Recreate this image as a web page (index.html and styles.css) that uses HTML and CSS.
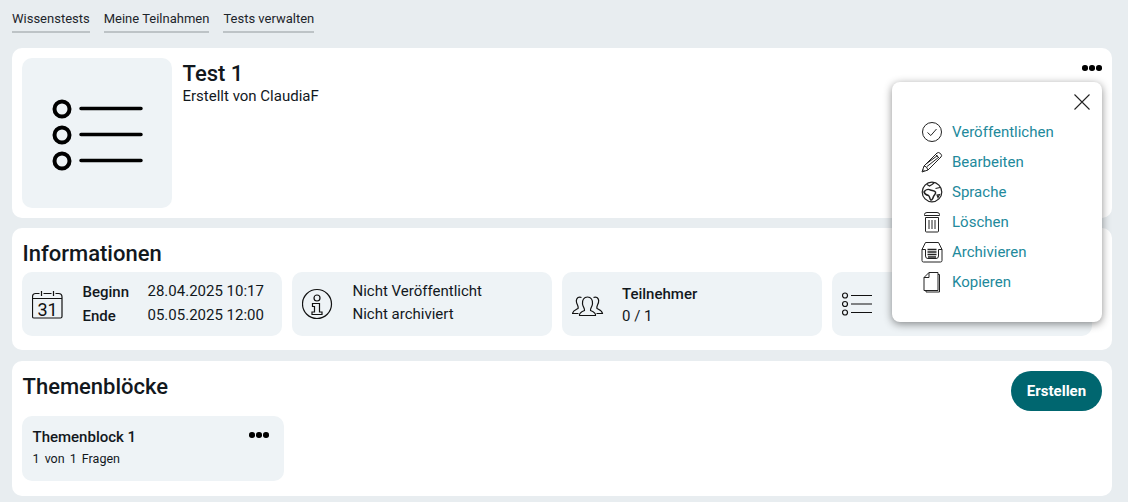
FILE: index.html
```html
<!DOCTYPE html>
<html lang="de">
<head>
<meta charset="utf-8">
<title>Test 1</title>
<link rel="stylesheet" href="styles.css">
</head>
<body>
<nav class="tabs">
  <a class="tab">Wissenstests</a>
  <a class="tab">Meine Teilnahmen</a>
  <a class="tab">Tests verwalten</a>
</nav>

<section class="card head-card">
  <div class="thumb">
    <svg width="150" height="150" viewBox="0 0 150 150" fill="none" stroke="#000">
      <circle cx="40" cy="51" r="7.500" stroke-width="4"/>
      <circle cx="40" cy="77" r="7.500" stroke-width="4"/>
      <circle cx="40" cy="103" r="7.500" stroke-width="4"/>
      <path d="M59 50.500H119M59 76.500H119M59 102.500H119" stroke-width="3.500" stroke-linecap="round"/>
    </svg>
  </div>
  <div class="head-text">
    <h1>Test 1</h1>
    <p>Erstellt von ClaudiaF</p>
  </div>
  <div class="dots head-dots"><i></i><i></i><i></i></div>
</section>

<section class="card info-card">
  <h2>Informationen</h2>
  <div class="tiles">
    <div class="tile">
      <svg class="tile-icon" width="32" height="32" viewBox="0 0 32 32" fill="none" stroke="#111" stroke-width="1.200">
        <path d="M3.500 5.500H7.500M11.500 5.500H19.500M23.500 5.500H26.500Q30 5.500 30 9V28.500Q30 30 28.500 30H2Q0.500 30 0.500 28.500V9Q0.500 5.500 3.500 5.500"/>
        <path d="M9.500 3V8M21.500 3V8M0.500 10.500H30"/>
        <text x="15.500" y="27.500" text-anchor="middle" class="cal-num">31</text>
      </svg>
      <dl class="dates">
        <dt>Beginn</dt><dd>28.04.2025 10:17</dd>
        <dt>Ende</dt><dd>05.05.2025 12:00</dd>
      </dl>
    </div>
    <div class="tile tile-status">
      <svg class="tile-icon" width="32" height="32" viewBox="0 0 32 32" fill="none" stroke="#111" stroke-width="1.200">
        <circle cx="15" cy="16" r="14.500"/>
        <circle cx="15" cy="10" r="3"/>
        <path d="M10.500 15.500H17.500V24H20V26.500H10V24H12.500V18.500H10.500Z"/>
      </svg>
      <div class="tile-lines">
        <span>Nicht Veröffentlicht</span>
        <span>Nicht archiviert</span>
      </div>
    </div>
    <div class="tile">
      <svg class="tile-icon" width="32" height="32" viewBox="0 0 32 32" fill="none" stroke="#111" stroke-width="1.200">
        <path d="M7.500 27.500C6.800 25 9.500 23.800 12.500 22.500C13 21 11 19 10.500 16C10 12 12 9 15.500 9C19 9 21 12 20.500 16C20 19 18 21 18.500 22.500C21.500 23.800 24.200 25 23.500 27.500Z"/>
        <path d="M9.500 9.500C8.500 9 7 9 6 9.500C4 11 4 14 5.500 17C6 18 6.500 19 6 20.500C4 21.700 0.800 22.500 0.500 25.500H6.500"/>
        <path d="M21.500 9.500C22.500 9 24 9 25 9.500C27 11 27 14 25.500 17C25 18 24.500 19 25 20.500C27 21.700 30.200 22.500 30.500 25.500H24.500"/>
      </svg>
      <div class="tile-lines tile-people">
        <strong>Teilnehmer</strong>
        <span>0 / 1</span>
      </div>
    </div>
    <div class="tile">
      <svg class="tile-icon" width="32" height="32" viewBox="0 0 32 32" fill="none" stroke="#111" stroke-width="1.200">
        <circle cx="3" cy="7.500" r="2.500"/>
        <circle cx="3" cy="16" r="2.500"/>
        <circle cx="3" cy="24.500" r="2.500"/>
        <path d="M9 7.500H30M9 16H30M9 24.500H30"/>
      </svg>
    </div>
  </div>
</section>

<section class="card blocks-card">
  <div class="blocks-head">
    <h2>Themenblöcke</h2>
    <button class="create" type="button">Erstellen</button>
  </div>
  <div class="block">
    <div class="block-top">
      <strong>Themenblock 1</strong>
      <div class="dots"><i></i><i></i><i></i></div>
    </div>
    <p class="block-sub">1 von 1 Fragen</p>
  </div>
</section>

<div class="menu">
  <svg class="menu-close" width="18" height="18" viewBox="0 0 18 18" stroke="#222" stroke-width="1.100" fill="none">
    <path d="M1.500 1.500L16.500 16.500M16.500 1.500L1.500 16.500"/>
  </svg>
  <ul class="menu-list">
    <li>
      <svg width="22" height="22" viewBox="0 0 22 22" fill="none" stroke="#222" stroke-width="1"><circle cx="11" cy="11" r="9.500"/><path d="M6.500 11.500L9.800 14.500L15.500 8"/></svg>
      <span>Veröffentlichen</span>
    </li>
    <li>
      <svg width="22" height="22" viewBox="0 0 22 22" fill="none" stroke="#222" stroke-width="1"><path d="M1 21L3 15L16 2Q17.500 0.800 19.500 2.500Q21.500 4.500 20 6L7 19ZM3 15Q6 15 7 19M14.500 3.500L18.500 7.500M5 13L16.500 4.500M6 15.500L18 6M2 18.500L3.500 20"/></svg>
      <span>Bearbeiten</span>
    </li>
    <li>
      <svg width="22" height="22" viewBox="0 0 22 22" fill="none" stroke="#222" stroke-width="1.200"><circle cx="11" cy="11" r="9.800"/><path d="M6 3.500L8.500 5L11 3.500L13 2"/><path d="M3 11C4.500 8.500 7.500 8 9.500 9C11 9.700 13.500 9 14.500 11C15.300 13 13 14 12.500 15.500C12 17.500 10.800 19.500 9.800 19C8.500 18 9 15.500 7.500 14.500C5.500 14 3.500 13 3 11Z" stroke-width="1.500"/><path d="M14.500 7.500L19 6.500M16 14L18.500 13.500L17 16.500Z"/></svg>
      <span>Sprache</span>
    </li>
    <li>
      <svg width="22" height="22" viewBox="0 0 22 22" fill="none" stroke="#222" stroke-width="1"><path d="M3.500 3.500Q3.500 1.500 6 1.500H16Q18.500 1.500 18.500 3.500V4.500H3.500ZM4.500 6.500H17.500V20Q17.500 21 16.500 21H5.500Q4.500 21 4.500 20ZM8 9V18M11 9V18M14 9V18"/></svg>
      <span>Löschen</span>
    </li>
    <li>
      <svg width="22" height="22" viewBox="0 0 22 22" fill="none" stroke="#222" stroke-width="1"><path d="M1 8.500L4.500 1.500H17.500L21 8.500V19.500Q21 21 19.500 21H2.500Q1 21 1 19.500ZM1 8.500H4.500V15Q4.500 17.500 7 17.500H15Q17.500 17.500 17.500 15V8.500H21"/><path d="M6.500 8.500H15.500M6.500 11H15.500M6.500 13.500H15.500M7 16H15" stroke-width="1.500"/></svg>
      <span>Archivieren</span>
    </li>
    <li>
      <svg width="22" height="22" viewBox="0 0 22 22" fill="none" stroke="#222" stroke-width="1"><path d="M3 6.500L8 1.500H17V19.500H3ZM8 1.500V6.500H3M17 3.500H18.500V21H5V19.500"/></svg>
      <span>Kopieren</span>
    </li>
  </ul>
</div>
</body>
</html>
```
FILE: styles.css
```css
* { box-sizing: border-box; }
html, body { margin: 0; padding: 0; }
body {
  width: 1128px;
  height: 502px;
  overflow: hidden;
  position: relative;
  padding: 0 16px 0 12px;
  background: #e8edf0;
  font-family: Roboto, "Liberation Sans", sans-serif;
  color: #12181d;
}
.tabs { display: flex; gap: 14px; height: 48px; padding-top: 11px; }
.tab {
  height: 22px;
  font-size: 13px;
  line-height: 16px;
  border-bottom: 2px solid #bdc3c6;
  color: #1d252b;
}
.card { width: 1100px; background: #fff; border-radius: 10px; }
.head-card { height: 170px; padding: 10px; display: flex; gap: 10.500px; position: relative; }
.thumb { width: 150px; height: 150px; background: #eef3f6; border-radius: 10px; }
.head-text h1 { margin: 3px 0 0; font-size: 22px; line-height: 26px; font-weight: 500; }
.head-text p { margin: 0; font-size: 15px; line-height: 18px; }
.dots { display: flex; gap: 1.600px; }
.dots i { width: 5.600px; height: 5.600px; background: #000; border-radius: 50%; }
.head-dots { position: absolute; top: 17px; right: 10px; }
.info-card { height: 122px; margin-top: 10px; padding: 12px 10px 0; }
h2 { margin: 0 0 0 0.500px; font-size: 22px; line-height: 27px; font-weight: 500; color: #12181d; }
.tiles { display: flex; gap: 10px; margin-top: 5px; }
.tile {
  width: 260px;
  height: 64px;
  flex: none;
  background: #eef3f6;
  border-radius: 10px;
  display: flex;
  align-items: center;
  padding-left: 10px;
  font-size: 15px;
}
.tile-icon { flex: none; }
.cal-num { font-family: Roboto, sans-serif; font-size: 18px; stroke: none; fill: #111; }
.dates {
  margin: -1px 0 0 18.500px;
  display: grid;
  grid-template-columns: 65px auto;
  row-gap: 5px;
  line-height: 18px;
}
.dates dt { font-weight: 500; padding-top: 1px; }
.dates dd { margin: 0; }
.tile-lines { margin-left: 18.500px; display: flex; flex-direction: column; gap: 5px; line-height: 18px; }
.tile-status .tile-lines { margin-top: -4px; }
.tile-people { margin-top: 1px; gap: 4px; margin-left: 18px; }
.tile strong { font-weight: 500; }
.blocks-card { height: 135px; margin-top: 11px; padding: 10px; }
.blocks-head { display: flex; justify-content: space-between; align-items: flex-start; height: 45px; }
.blocks-head h2 { margin-top: 2px; }
.create {
  width: 91px;
  height: 40px;
  border: 0;
  border-radius: 20px;
  background: #00666f;
  color: #fff;
  font: 700 15px Roboto, sans-serif;
}
.block { width: 262px; height: 65px; background: #eef3f6; border-radius: 10px; padding: 12px 15px 0 10.500px; }
.block-top { display: flex; justify-content: space-between; align-items: center; font-size: 15px; line-height: 18px; }
.block-top strong { font-weight: 500; }
.block-top .dots { margin-top: -4px; }
.block-sub { margin: 5px 0 0; font-size: 12.500px; line-height: 16px; word-spacing: 2px; }
.menu {
  position: absolute;
  left: 892px;
  top: 82px;
  width: 210px;
  height: 240px;
  background: #fff;
  border-radius: 8px;
  box-shadow: 0 2px 8px rgba(0, 0, 0, 0.45);
}
.menu-close { position: absolute; top: 11px; right: 11px; }
.menu-list {
  list-style: none;
  margin: 0;
  padding: 35px 0 0 29px;
}
.menu-list li {
  height: 30px;
  display: flex;
  align-items: center;
  gap: 9px;
  font-size: 15px;
  color: #22899b;
}
.menu-list svg { flex: none; }
```
